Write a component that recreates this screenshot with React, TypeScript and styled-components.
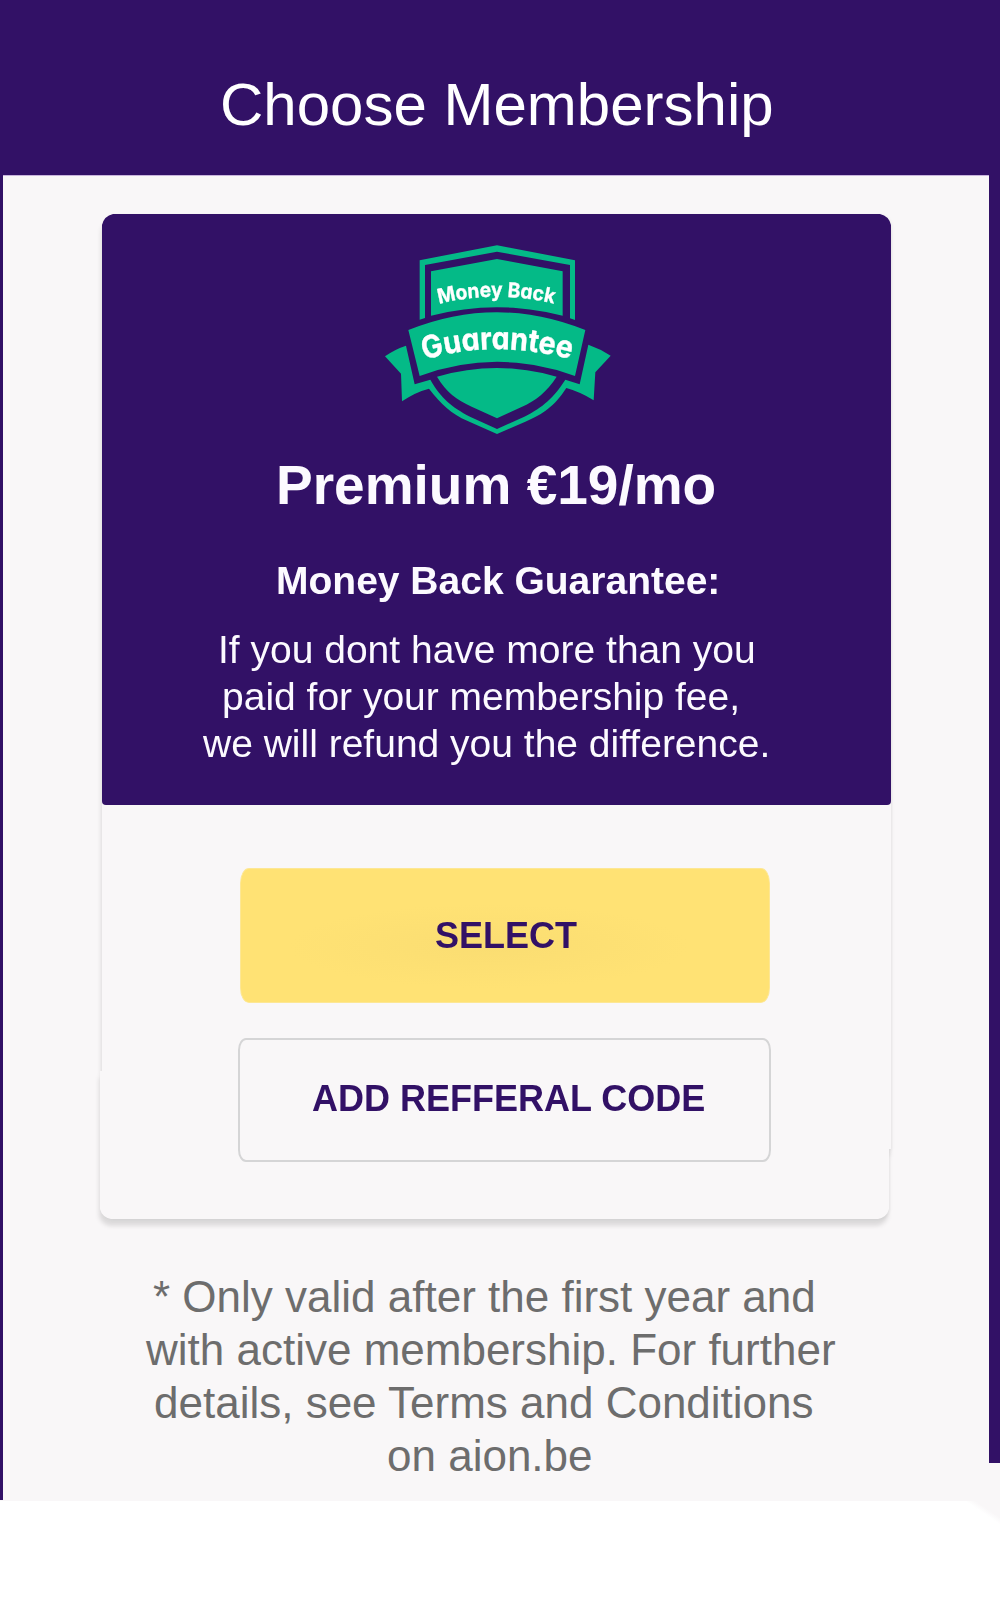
import React from "react";
import styled, { createGlobalStyle } from "styled-components";

const purple = "#321166";
const paper = "#f9f7f8";
const green = "#04ba87";

const GlobalStyle = createGlobalStyle`
  *, *::before, *::after { box-sizing: border-box; }
  body { margin: 0; background: #fff; font-family: "Liberation Sans", Arial, sans-serif; }
  button, h1, h2, h3, p { margin: 0; padding: 0; font: inherit; }
`;

const Page = styled.main`
  width: 1000px;
  height: 1600px;
  display: flex;
  flex-direction: column;
  overflow: hidden;
`;

const Header = styled.header`
  height: 175px;
  flex: none;
  padding-top: 70px;
  background: ${purple};
`;

const Body = styled.div`
  display: flex;
  height: 1326px;
  flex: none;
  background: ${paper};
`;

const Rail = styled.div<{ $width: number; $height: number }>`
  width: ${(p) => p.$width}px;
  height: ${(p) => p.$height}px;
  flex: none;
  background: ${purple};
`;

const Panel = styled.section`
  flex: 1;
  border-top: 1px solid #c9b4dd;
`;

const BottomEdge = styled.div`
  align-self: flex-end;
  width: 34px;
  height: 24px;
  background: linear-gradient(214deg, ${paper} 0%, ${paper} 35%, #fff 50%);
`;

const CardShadow = styled.div`
  margin: 38px 0 0 97px;
  width: 791px;
  filter: drop-shadow(-1px 7px 2.2px rgba(0, 0, 0, 0.11)) drop-shadow(1px 1px 1.5px rgba(0, 0, 0, 0.05));
`;

const Card = styled.article`
  width: 791px;
  height: 1005px;
  background: ${paper};
  clip-path: path("M2 11 Q4 2 13 0 H780 Q789 2 791 11 V935 H789 V995 Q787 1003 778 1005 H11 Q2 1003 0 995 V857 H2 Z");
`;

const Hero = styled.div`
  margin-left: 2px;
  height: 591px;
  padding-top: 16px;
  background: ${purple};
  border-radius: 0 0 4px 4px;
  color: #fcfaff;
`;

const Actions = styled.div`
  padding: 63px 0 0 138px;
  display: flex;
  flex-direction: column;
  align-items: flex-start;
  gap: 35px;
`;

const ActionButton = styled.button<{ $outlined?: boolean }>`
  width: ${(p) => (p.$outlined ? 533 : 530)}px;
  height: ${(p) => (p.$outlined ? 124 : 135)}px;
  margin-left: ${(p) => (p.$outlined ? 0 : 2)}px;
  padding-bottom: ${(p) => (p.$outlined ? 2 : 0)}px;
  border: ${(p) => (p.$outlined ? "2px solid #d5d5d6" : "1px solid #fde794")};
  border-radius: ${(p) => (p.$outlined ? "8px / 12px" : "9px / 15px")};
  background: ${(p) =>
    p.$outlined
      ? paper
      : "radial-gradient(ellipse 200px 42px at 47% 58%, #fadd72 0%, #ffe274 100%)"};
  color: ${purple};
  text-align: left;
`;

const Line = styled.span<{ $size: number; $height: number; $indent: number; $bold?: boolean }>`
  display: block;
  padding-left: ${(p) => p.$indent}px;
  font-size: ${(p) => p.$size}px;
  line-height: ${(p) => p.$height}px;
  font-weight: ${(p) => (p.$bold ? 700 : 400)};
  white-space: pre;
`;

const Title = styled.h1`
  color: #fff;
`;

const Price = styled.h2`
  padding-top: 3px;
`;

const Subhead = styled.h3`
  padding-top: 41px;
`;

const Copy = styled.p`
  padding-top: 22px;
`;

const Footnote = styled.p`
  padding-top: 51px;
  color: #6d6d6d;
`;

const BadgeSvg = styled.svg`
  display: block;
  width: 260px;
  height: 220px;
  margin-left: 268px;
`;

const BadgeText = styled.text`
  fill: #fff;
  stroke: #fff;
  stroke-width: 1px;
  font-family: Inter, "Open Sans", sans-serif;
  font-weight: 700;
  font-feature-settings: "cv11" 1;
`;

function Badge() {
  return (
    <BadgeSvg viewBox="0 0 780 660" role="img" aria-label="Money Back Guarantee">
      <defs>
        <path id="upper-arc" d="M207 222 Q382 177 570 225" />
        <path id="lower-arc" d="M160 391 Q382 321 640 398" />
      </defs>
      <g fill={green}>
        <path d="M149 91 L381 46 L615 91 V270 L600 265 V105 L381 65 L165 105 V264 L149 269 Z" />
        <path d="M183 124 L381 87 L578 124 V257 Q381 206 183 257 Z" />
        <path d="M115 300 Q381 193 646 300 L615 438 Q381 353 149 438 Z" />
        <path d="M45 379 Q74 358 108 347 L134 463 L181 449 C214 506 245 531 300 560 L381 597 L463 560 C520 531 550 504 586 449 L629 463 L655 344 Q690 356 722 377 L676 427 L671 511 Q632 486 589 474 C553 529 520 552 466 575 L381 612 L293 573 C242 550 215 524 177 476 Q137 486 96 514 L93 431 Z" />
        <path d="M201 440 Q381 388 560 440 C530 486 499 511 453 532 L381 565 L305 530 C259 509 229 486 201 440 Z" />
      </g>
      <BadgeText fontSize="61">
        <textPath href="#upper-arc" textLength="348" lengthAdjust="spacingAndGlyphs">Money Back</textPath>
      </BadgeText>
      <BadgeText fontSize="93">
        <textPath href="#lower-arc" startOffset="3" textLength="445" lengthAdjust="spacingAndGlyphs">Guarantee</textPath>
      </BadgeText>
    </BadgeSvg>
  );
}

export default function App() {
  return (
    <>
      <GlobalStyle />
      <Page>
        <Header>
          <Title>
            <Line $size={60} $height={70} $indent={220}>Choose Membership</Line>
          </Title>
        </Header>
        <Body>
          <Rail $width={3} $height={1325} />
          <Panel>
            <CardShadow>
              <Card>
                <Hero>
                  <Badge />
                  <Price>
                    <Line $size={55} $height={64} $indent={174} $bold>Premium €19/mo</Line>
                  </Price>
                  <Subhead>
                    <Line $size={39} $height={46} $indent={174} $bold>Money Back Guarantee:</Line>
                  </Subhead>
                  <Copy>
                    <Line $size={39} $height={47} $indent={116}>If you dont have more than you</Line>
                    <Line $size={39} $height={47} $indent={120}>paid for your membership fee,</Line>
                    <Line $size={39} $height={47} $indent={101}>we will refund you the difference.</Line>
                  </Copy>
                </Hero>
                <Actions>
                  <ActionButton>
                    <Line $size={36} $height={42} $indent={194} $bold>SELECT</Line>
                  </ActionButton>
                  <ActionButton $outlined>
                    <Line $size={36} $height={42} $indent={72} $bold>ADD REFFERAL CODE</Line>
                  </ActionButton>
                </Actions>
              </Card>
            </CardShadow>
            <Footnote>
              <Line $size={44} $height={53} $indent={150}>* Only valid after the first year and</Line>
              <Line $size={44} $height={53} $indent={143}>with active membership. For further</Line>
              <Line $size={44} $height={53} $indent={151}>details, see Terms and Conditions</Line>
              <Line $size={44} $height={53} $indent={384}>on aion.be</Line>
            </Footnote>
          </Panel>
          <Rail $width={11} $height={1288} />
        </Body>
        <BottomEdge />
      </Page>
    </>
  );
}
